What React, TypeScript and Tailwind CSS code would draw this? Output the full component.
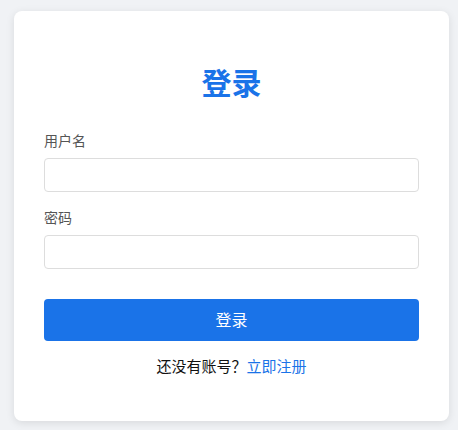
const App = () => {
  return (
    <div className="min-h-[430px] w-full bg-[#f0f2f5] pt-[11px] pb-[9px] font-['Inter','Noto_Sans_CJK_SC',sans-serif]">
      <div className="ml-[14px] w-[435px] rounded-[8px] bg-white px-[30px] pt-[54px] pb-[44px] shadow-[0_2px_8px_rgba(0,0,0,0.1)]">
        <h2 className="mb-[30px] text-center text-[30px] leading-[36px] font-bold text-[#1a73e8]">
          登录
        </h2>
        <form onSubmit={(e) => e.preventDefault()}>
          <div className="mb-[16px]">
            <label className="mb-[7px] block text-[14px] leading-[20px] text-[#555]">
              用户名
            </label>
            <input
              type="text"
              className="block h-[34px] w-full rounded-[4px] border border-[#ddd] px-[10px] text-[14px] outline-none"
            />
          </div>
          <div>
            <label className="mb-[7px] block text-[14px] leading-[20px] text-[#555]">
              密码
            </label>
            <input
              type="password"
              className="block h-[34px] w-full rounded-[4px] border border-[#ddd] px-[10px] text-[14px] outline-none"
            />
          </div>
          <button
            type="submit"
            className="mt-[30px] block h-[42px] w-full rounded-[4px] bg-[#1a73e8] text-[16px] text-white"
          >
            登录
          </button>
        </form>
        <p className="mt-[16px] text-center text-[15px] leading-[20px] text-[#111]">
          还没有账号？<a href="#" className="text-[#1a73e8]">立即注册</a>
        </p>
      </div>
    </div>
  );
};

export default App;
